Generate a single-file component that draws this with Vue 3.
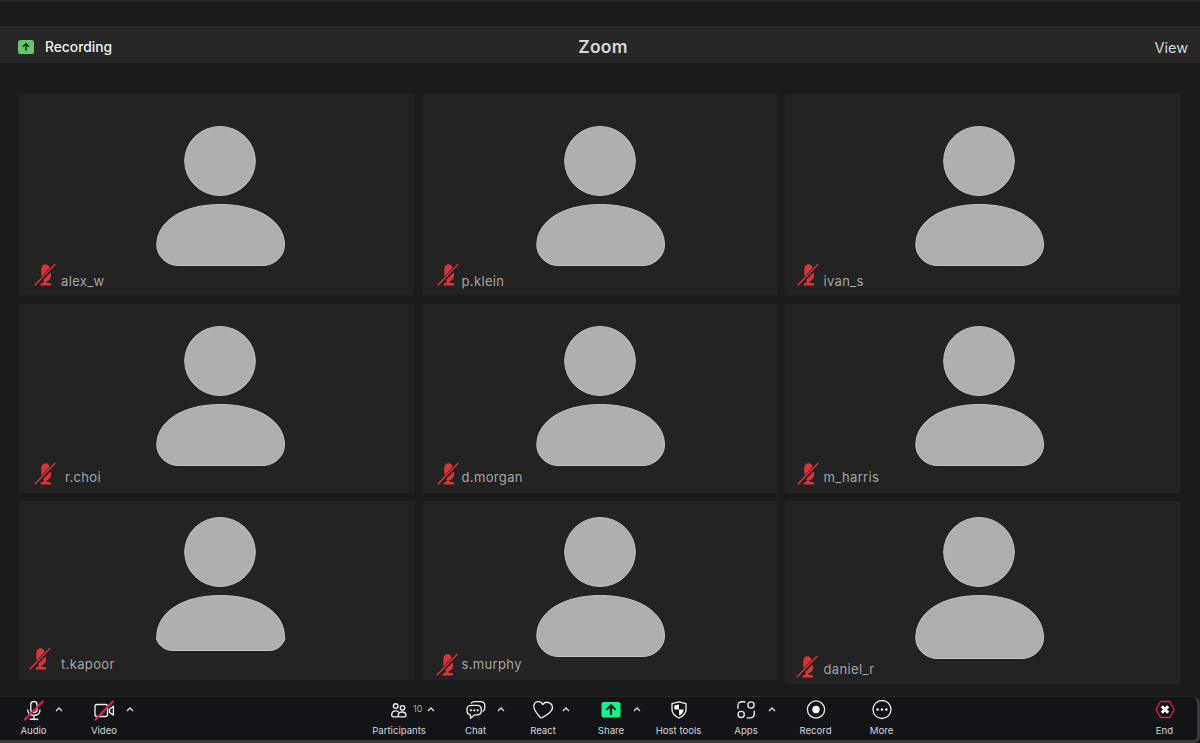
<template>
  <div class="meeting">
    <header class="topbar">
      <div class="recording">
        <svg width="16" height="14" viewBox="0 0 16 14">
          <rect width="16" height="14" rx="2.5" fill="#62c66c" />
          <path d="M8 10.6V4M5 6.7l3-3 3 3" fill="none" stroke="#17251a" stroke-width="1.5" />
        </svg>
        <span>Recording</span>
      </div>
      <h1 class="title">Zoom</h1>
      <button class="view">View</button>
    </header>

    <!-- participants -->
    <main class="gallery">
      <section
        v-for="p in people"
        :key="p.name"
        class="tile"
        :style="{ height: p.height + 'px', paddingLeft: p.avatarX + 'px', paddingTop: p.avatarY + 'px' }"
      >
        <svg class="avatar" width="130" height="144" viewBox="0 0 130 144">
          <ellipse cx="64" cy="35" rx="35.3" ry="34.5" />
          <path :d="bodyPath(p.bottom, p.cropped)" />
        </svg>
        <svg class="muted" width="22" height="24" viewBox="0 0 22 24" :style="{ left: p.micX + 'px', top: p.micY + 'px' }">
          <path d="M7.3 6a4.2 4.8 0 0 1 8.4 0v5.400a4.200 5 0 0 1-8.400 0z" fill="#d9343a" />
          <path d="M17 9.500v3.300c0 3.200-2.200 5-4.800 5.700v1.100l4.800.9v1.900H6.600v-1.500l3.400-1.900v-1.300c-1.200-.2-2-.6-2.700-1.400" fill="#d9343a" />
          <path d="M1.200 22.500L21.300 1.700" stroke="#232323" stroke-width="3.800" />
          <path d="M.8 22.200L21.300 1" stroke="#d9343a" stroke-width="1.400" />
        </svg>
        <span class="name" :style="{ left: p.nameX + 'px', top: p.nameY + 'px' }">{{ p.name }}</span>
      </section>
    </main>

    <!-- controls -->
    <footer class="toolbar">
      <button
        v-for="tool in tools"
        :key="tool.id"
        class="tool"
        :class="tool.id"
        :style="{ width: tool.width + 'px' }"
      >
        <svg class="icon" width="24" height="22" viewBox="0 0 24 22">
          <g v-if="tool.id === 'audio'">
            <rect x="8.8" y="1.5" width="6.2" height="11" rx="3.1" />
            <path d="M5.8 9.8c0 3.6 2.5 5.6 6.1 5.6s6.1-2 6.1-5.6M12 15.4v3.8M8.2 19.2h7.6" />
            <path class="slash" d="M3 19.5L20.8 1.5" />
          </g>
          <g v-else-if="tool.id === 'video'">
            <rect x="3" y="4.5" width="12.5" height="12" rx="2" />
            <path d="M17.5 9.2l3.9-2.9v8.800l-3.900-2.900z" />
            <path class="slash" d="M3.5 19.5L20.8 1.5" />
          </g>
          <g v-else-if="tool.id === 'participants'">
            <circle cx="8.7" cy="6" r="2.3" />
            <circle cx="15.5" cy="7.8" r="2.2" />
            <path d="M11 16.8H6.6c-1.3 0-1.900-.6-1.900-1.800 0-2.500 1.600-4.200 4-4.200 1 0 1.800.2 2.500.7M11.200 15.200c0-2 1.600-3.200 3.900-3.200s3.800 1.200 3.800 3.200c0 1.100-.5 1.600-1.700 1.600H13c-1.200 0-1.800-.5-1.800-1.600z" />
          </g>
          <g v-else-if="tool.id === 'chat'">
            <path d="M7.4 3c.7-1 1.7-1.400 3-1.400h6.200c2.600 0 4.200 1.600 4.200 4.100V8c0 1.500-.6 2.600-1.700 3.300" />
            <path d="M7.2 5.300h5.900c2.700 0 4.200 1.500 4.200 4.100v1.400c0 2.600-1.500 4.100-4.200 4.100h-2.600l-4 3.400v-3.500c-2.200-.2-3.500-1.700-3.500-4V9.400c0-2.600 1.500-4.100 4.200-4.100z" />
            <g class="solid"><circle cx="6.8" cy="10.3" r="1.1" /><circle cx="10.2" cy="10.3" r="1.1" /><circle cx="13.6" cy="10.3" r="1.1" /></g>
          </g>
          <path
            v-else-if="tool.id === 'react'"
            d="M11.800 4.500C13.500 2.200 16.600 2 18.900 3.200c2.700 1.500 3.300 4.600 1.600 7.100-1.900 2.800-5.200 5-9.400 7.400-.8.4-1.500.2-2-.5C5.900 13.600 3.300 10.200 2.800 7 2.400 4.200 4.100 1.900 6.600 1.700c2.200-.2 4.200.9 5.200 2.800z"
          />
          <g v-else-if="tool.id === 'share'">
            <rect class="green" x="2.5" y="2" width="19" height="15.5" rx="2" />
            <path class="dark" d="M12 14.2V5.8M8 9.2l4-4 4 4" />
          </g>
          <g v-else-if="tool.id === 'host'">
            <path d="M12 1.800l7 1.800v6.200c0 3.600-2.600 6-7 8.200-4.400-2.200-7-4.600-7-8.200V3.600z" />
            <path class="solid" d="M12 4.500v5H7.400V5.600zM12 9.500h4.600c0 2.800-1.700 4.500-4.600 6.200z" />
          </g>
          <g v-else-if="tool.id === 'apps'">
            <circle cx="17" cy="5" r="3.1" />
            <circle cx="7.2" cy="14.5" r="3.1" />
            <path d="M11 1.700H8.200C5.400 1.700 4 3 4 5.500v2.800M13.200 17.800h2.600c2.900 0 4.400-1.400 4.400-4.100v-2.600" />
          </g>
          <g v-else-if="tool.id === 'record'">
            <circle cx="12" cy="9.5" r="8.6" />
            <circle class="solid" cx="12" cy="9.5" r="3.7" />
          </g>
          <g v-else-if="tool.id === 'more'">
            <circle cx="12" cy="9.5" r="9" />
            <g class="solid"><circle cx="7.6" cy="9.5" r="1.2" /><circle cx="12" cy="9.5" r="1.2" /><circle cx="16.4" cy="9.5" r="1.2" /></g>
          </g>
          <g v-else>
            <path class="hexagon" d="M7.500 1.500h9.200l4.500 8-4.500 8H7.500L3 9.500z" />
            <path class="cross" d="M8.800 6.300l6.400 6.400M15.200 6.300l-6.400 6.400" />
          </g>
        </svg>
        <span class="label">{{ tool.label }}</span>
        <span v-if="tool.count" class="count">{{ tool.count }}</span>
        <svg v-if="tool.chevron" class="chevron" width="8" height="5" viewBox="0 0 8 5" :style="{ marginLeft: tool.chevron + 'px' }">
          <path d="M1 4l3-3 3 3" />
        </svg>
      </button>
    </footer>
  </div>
</template>

<script setup>
const people = [
  { name: 'alex_w', height: 201, avatarX: 137, avatarY: 32, bottom: 140, micX: 15, micY: 169, nameX: 42, nameY: 178 },
  { name: 'p.klein', height: 201, avatarX: 113.5, avatarY: 32, bottom: 140, micX: 14, micY: 169, nameX: 39, nameY: 178 },
  { name: 'ivan_s', height: 201, avatarX: 130, avatarY: 32, bottom: 140, micX: 12, micY: 169, nameX: 38.5, nameY: 178 },
  { name: 'r.choi', height: 189, avatarX: 137, avatarY: 22, bottom: 140, micX: 15, micY: 158, nameX: 46, nameY: 164 },
  { name: 'd.morgan', height: 189, avatarX: 113.5, avatarY: 22, bottom: 140, micX: 14, micY: 158, nameX: 39, nameY: 164 },
  { name: 'm_harris', height: 189, avatarX: 130, avatarY: 22, bottom: 140, micX: 12, micY: 158, nameX: 38.5, nameY: 164 },
  { name: 't.kapoor', height: 179, avatarX: 137, avatarY: 16, bottom: 134, cropped: true, micX: 10, micY: 146, nameX: 42, nameY: 154 },
  { name: 's.murphy', height: 179, avatarX: 113.5, avatarY: 16, bottom: 140, micX: 13, micY: 152, nameX: 39, nameY: 154 },
  { name: 'daniel_r', height: 183, avatarX: 130, avatarY: 16, bottom: 142, micX: 11, micY: 154, nameX: 38.5, nameY: 159 }
]

const tools = [
  { id: 'audio', label: 'Audio', width: 67, chevron: 21.5 },
  { id: 'video', label: 'Video', width: 74, chevron: 22 },
  { id: 'participants', label: 'Participants', width: 84, chevron: 27.5, count: 10 },
  { id: 'chat', label: 'Chat', width: 69, chevron: 21.5 },
  { id: 'react', label: 'React', width: 66, chevron: 18.5 },
  { id: 'share', label: 'Share', width: 70, chevron: 21.5 },
  { id: 'host', label: 'Host tools', width: 65 },
  { id: 'apps', label: 'Apps', width: 70, chevron: 22 },
  { id: 'record', label: 'Record', width: 69 },
  { id: 'more', label: 'More', width: 63 },
  { id: 'end', label: 'End', width: 71 }
]

// shoulders, y is the flat lower edge
const bodyPath = (y, cropped) => {
  if (cropped) {
    return 'M.8 120C.8 95 27 78.5 64.5 78.5S128.5 95 128.5 120L129 122C126 129 121 133.5 113 133.5H17C9 133.5 3 129 .5 122Z'
  }
  const side = y - 21
  return `M.8 ${side}C.8 95 27 78.5 64.5 78.5S128.5 95 128.5 ${side}C128.5 ${side + 11} 118.5 ${y - 0.5} 107 ${y - 0.5}H22C10.5 ${y - 0.5} .8 ${side + 11} .8 ${side}Z`
}
</script>

<style scoped>
.meeting {
  width: 1200px;
  height: 743px;
  display: flex;
  flex-direction: column;
  overflow: hidden;
  box-sizing: border-box;
  padding-top: 24px;
  border-top: 2px solid #272727;
  background: #1b1b1b;
  font-family: Inter, 'Liberation Sans', sans-serif;
}

button {
  padding: 0;
  border: 0;
  background: none;
  font-family: inherit;
}

.topbar {
  display: grid;
  grid-template-columns: 1fr auto 1fr;
  align-items: center;
  height: 37px;
  flex: none;
  padding: 0 12px 0 18px;
  background: #272727;
}

.recording {
  display: flex;
  align-items: center;
  gap: 11px;
  padding-top: 5px;
  color: #f0f0f0;
  font-size: 13.8px;
  font-weight: 500;
}

.title {
  margin: 3px 0 0;
  color: #d6d6d6;
  font-size: 17.5px;
  font-weight: 600;
  letter-spacing: 0.2px;
}

.view {
  justify-self: end;
  margin-top: 6px;
  color: #d5d5d5;
  font-size: 14.5px;
}

.gallery {
  display: grid;
  grid-template-columns: 395px 354px 395px;
  grid-template-rows: 201px 189px 183px;
  gap: 8.5px;
  align-items: start;
  flex: none;
  padding: 31px 20px 0 19px;
}

.tile {
  position: relative;
  box-sizing: border-box;
  background: #232323;
  box-shadow: 0 0 0 1px #1d1d1d;
}

.avatar {
  display: block;
  fill: #afafaf;
  stroke: #c2c2c2;
  stroke-width: 1;
}

.muted,
.name {
  position: absolute;
}

.name {
  color: #a4a4a4;
  font-size: 13px;
  letter-spacing: 0.35px;
  line-height: 18px;
  white-space: nowrap;
}

.toolbar {
  display: flex;
  flex: none;
  box-sizing: border-box;
  height: 46px;
  margin-top: auto;
  border: solid #3b3b3e;
  border-width: 0 3px 3px 0;
  border-radius: 0 7px 7px 0;
  background: #131418;
  box-shadow: 0 -1px #222326;
}

.tool {
  position: relative;
  display: flex;
  flex-direction: column;
  align-items: center;
  flex: none;
  padding-top: 3px;
  color: #d4d4d6;
}

.participants {
  margin-left: 216px;
}

.end {
  margin-left: auto;
  margin-right: -3px;
}

.icon {
  fill: none;
  stroke: #ededee;
  stroke-width: 1.35;
  stroke-linecap: round;
  stroke-linejoin: round;
}

.icon .slash {
  stroke: #df1c59;
  stroke-width: 2.2;
}

.icon .solid {
  fill: #fff;
  stroke: none;
}

.icon .green {
  fill: #12f58b;
  stroke: none;
}

.icon .dark {
  stroke: #102019;
  stroke-width: 2.2;
}

.icon .hexagon {
  stroke: #d91e57;
}

.icon .cross {
  stroke: #fff;
  stroke-width: 3;
  stroke-linecap: butt;
}

.label {
  margin-top: 2px;
  font-size: 9.6px;
  line-height: 13px;
  white-space: nowrap;
}

.count {
  position: absolute;
  top: 6px;
  left: 56px;
  font-size: 9px;
  line-height: 12px;
  color: #aaa;
}

.chevron {
  position: absolute;
  top: 10px;
  left: 50%;
  fill: none;
  stroke: #e0e0e0;
  stroke-width: 1.3;
}
</style>

<style>
body {
  background: #1b1b1b;
}
</style>
